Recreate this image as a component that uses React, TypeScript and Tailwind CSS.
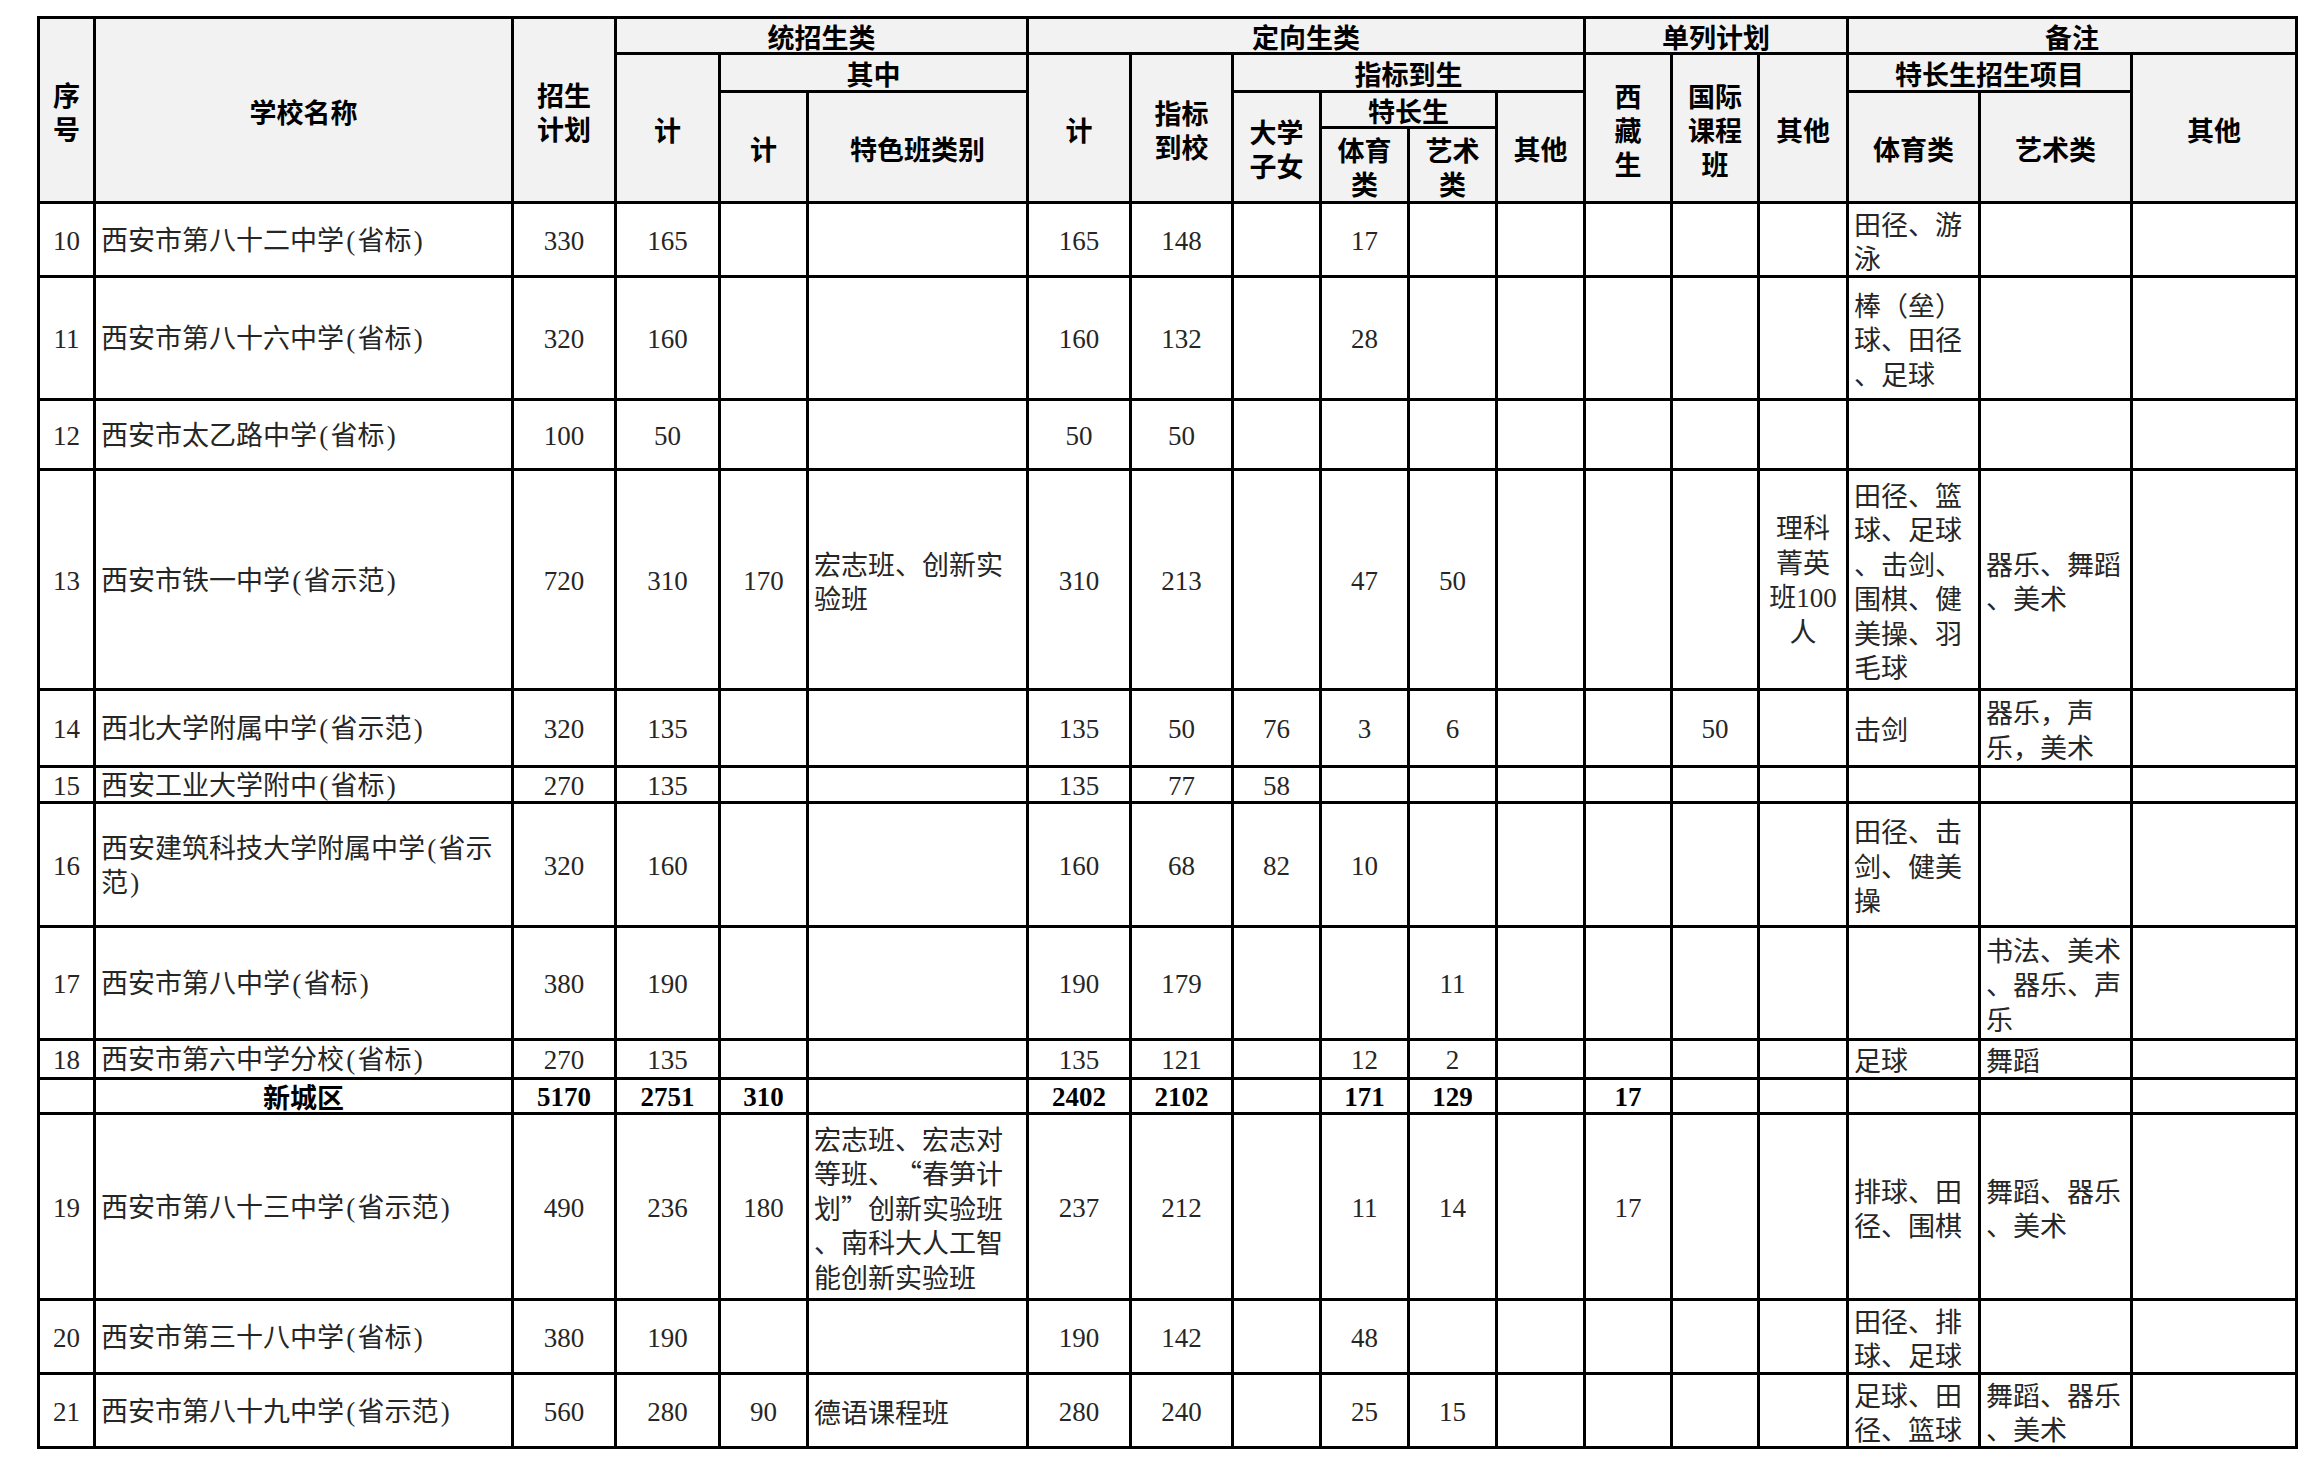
import type { ReactNode } from 'react';

const serif = "font-['Liberation_Serif','Noto_Sans_CJK_SC',serif]";
const cjk = "font-['Noto_Sans_CJK_SC',sans-serif]";

// header cells, placed on the 18 x 4 header grid
const header: { text: string; pos: string }[] = [
  { text: "序\n号", pos: "col-start-1 row-start-1 row-span-4" },
  { text: "学校名称", pos: "col-start-2 row-start-1 row-span-4" },
  { text: "招生\n计划", pos: "col-start-3 row-start-1 row-span-4" },
  { text: "统招生类", pos: "col-start-4 col-span-3 row-start-1" },
  { text: "计", pos: "col-start-4 row-start-2 row-span-3" },
  { text: "其中", pos: "col-start-5 col-span-2 row-start-2" },
  { text: "计", pos: "col-start-5 row-start-3 row-span-2" },
  { text: "特色班类别", pos: "col-start-6 row-start-3 row-span-2" },
  { text: "定向生类", pos: "col-start-7 col-span-6 row-start-1" },
  { text: "计", pos: "col-start-7 row-start-2 row-span-3" },
  { text: "指标\n到校", pos: "col-start-8 row-start-2 row-span-3" },
  { text: "指标到生", pos: "col-start-9 col-span-4 row-start-2" },
  { text: "大学\n子女", pos: "col-start-9 row-start-3 row-span-2" },
  { text: "特长生", pos: "col-start-10 col-span-2 row-start-3" },
  { text: "体育\n类", pos: "col-start-10 row-start-4" },
  { text: "艺术\n类", pos: "col-start-11 row-start-4" },
  { text: "其他", pos: "col-start-12 row-start-3 row-span-2" },
  { text: "单列计划", pos: "col-start-13 col-span-3 row-start-1" },
  { text: "西\n藏\n生", pos: "col-start-13 row-start-2 row-span-3" },
  { text: "国际\n课程\n班", pos: "col-start-14 row-start-2 row-span-3" },
  { text: "其他", pos: "col-start-15 row-start-2 row-span-3" },
  { text: "备注", pos: "col-start-16 col-span-3 row-start-1" },
  { text: "特长生招生项目", pos: "col-start-16 col-span-2 row-start-2" },
  { text: "体育类", pos: "col-start-16 row-start-3 row-span-2" },
  { text: "艺术类", pos: "col-start-17 row-start-3 row-span-2" },
  { text: "其他", pos: "col-start-18 row-start-2 row-span-3" },
];

type Row = { cells: string[]; total?: boolean };

const rows: Row[] = [
  { cells: ["10", "西安市第八十二中学(省标)", "330", "165", "", "", "165", "148", "", "17", "", "", "", "", "", "田径、游\n泳", "", ""] },
  { cells: ["11", "西安市第八十六中学(省标)", "320", "160", "", "", "160", "132", "", "28", "", "", "", "", "", "棒（垒）\n球、田径\n、足球", "", ""] },
  { cells: ["12", "西安市太乙路中学(省标)", "100", "50", "", "", "50", "50", "", "", "", "", "", "", "", "", "", ""] },
  { cells: ["13", "西安市铁一中学(省示范)", "720", "310", "170", "宏志班、创新实\n验班", "310", "213", "", "47", "50", "", "", "", "理科\n菁英\n班100\n人", "田径、篮\n球、足球\n、击剑、\n围棋、健\n美操、羽\n毛球", "器乐、舞蹈\n、美术", ""] },
  { cells: ["14", "西北大学附属中学(省示范)", "320", "135", "", "", "135", "50", "76", "3", "6", "", "", "50", "", "击剑", "器乐，声\n乐，美术", ""] },
  { cells: ["15", "西安工业大学附中(省标)", "270", "135", "", "", "135", "77", "58", "", "", "", "", "", "", "", "", ""] },
  { cells: ["16", "西安建筑科技大学附属中学(省示\n范)", "320", "160", "", "", "160", "68", "82", "10", "", "", "", "", "", "田径、击\n剑、健美\n操", "", ""] },
  { cells: ["17", "西安市第八中学(省标)", "380", "190", "", "", "190", "179", "", "", "11", "", "", "", "", "", "书法、美术\n、器乐、声\n乐", ""] },
  { cells: ["18", "西安市第六中学分校(省标)", "270", "135", "", "", "135", "121", "", "12", "2", "", "", "", "", "足球", "舞蹈", ""] },
  { cells: ["", "新城区", "5170", "2751", "310", "", "2402", "2102", "", "171", "129", "", "17", "", "", "", "", ""], total: true },
  { cells: ["19", "西安市第八十三中学(省示范)", "490", "236", "180", "宏志班、宏志对\n等班、“春笋计\n划”创新实验班\n、南科大人工智\n能创新实验班", "237", "212", "", "11", "14", "", "17", "", "", "排球、田\n径、围棋", "舞蹈、器乐\n、美术", ""] },
  { cells: ["20", "西安市第三十八中学(省标)", "380", "190", "", "", "190", "142", "", "48", "", "", "", "", "", "田径、排\n球、足球", "", ""] },
  { cells: ["21", "西安市第八十九中学(省示范)", "560", "280", "90", "德语课程班", "280", "240", "", "25", "15", "", "", "", "", "足球、田\n径、篮球", "舞蹈、器乐\n、美术", ""] },
];

// columns whose text sits at the left edge
const leftCols = [1, 5, 15, 16, 17];

// half-width parens and full-width quotes, as the sheet prints them
function renderText(text: string): ReactNode[] {
  return Array.from(text).map((ch, i) => {
    if (ch === '(' || ch === ')')
      return <span key={i} className="inline-block w-[13.5px] text-center">{ch}</span>;
    if (ch === '“')
      return <span key={i} className="inline-block w-[27px] text-right">{ch}</span>;
    if (ch === '”')
      return <span key={i} className="inline-block w-[27px] text-left">{ch}</span>;
    return ch;
  });
}

function HeaderCell({ text, pos }: { text: string; pos: string }) {
  return (
    <div className={`${pos} flex items-center justify-center bg-[#f2f2f2] pt-[3px]`}>
      <span className={`${cjk} whitespace-pre text-center text-[27px] leading-[34px] font-bold text-black`}>{text}</span>
    </div>
  );
}

function DataCell({ text, col, total }: { text: string; col: number; total?: boolean }) {
  const left = leftCols.includes(col) && !(total && col === 1);
  const font = col === 5 || col >= 15 || (total && col === 1) ? cjk : serif;
  return (
    <div className={`flex items-center bg-white pt-[3px] ${left ? 'justify-start px-[5px]' : 'justify-center'}`}>
      <span
        className={`${font} whitespace-pre text-[27px] leading-[34.5px] ${left ? 'text-left' : 'text-center'} ${
          total ? 'font-bold text-black' : 'text-[#262626]'
        }`}
      >
        {renderText(text)}
      </span>
    </div>
  );
}

export default function App() {
  return (
    <div className="min-h-screen bg-white pt-[16px] pl-[37px]">
      <div className="grid w-max gap-[3px] bg-black p-[3px] grid-cols-[53px_415px_100px_101px_85px_217px_100px_99px_85px_85px_85px_85px_84px_84px_86px_129px_149px_162px] grid-rows-[33px_35px_33px_72px_71px_120px_67px_217px_74px_33px_121px_110px_36px_32px_183px_71px_71px]">
        {header.map((h, i) => (
          <HeaderCell key={i} text={h.text} pos={h.pos} />
        ))}
        {rows.map((row, r) =>
          row.cells.map((c, i) => <DataCell key={`${r}-${i}`} text={c} col={i} total={row.total} />)
        )}
      </div>
    </div>
  );
}
